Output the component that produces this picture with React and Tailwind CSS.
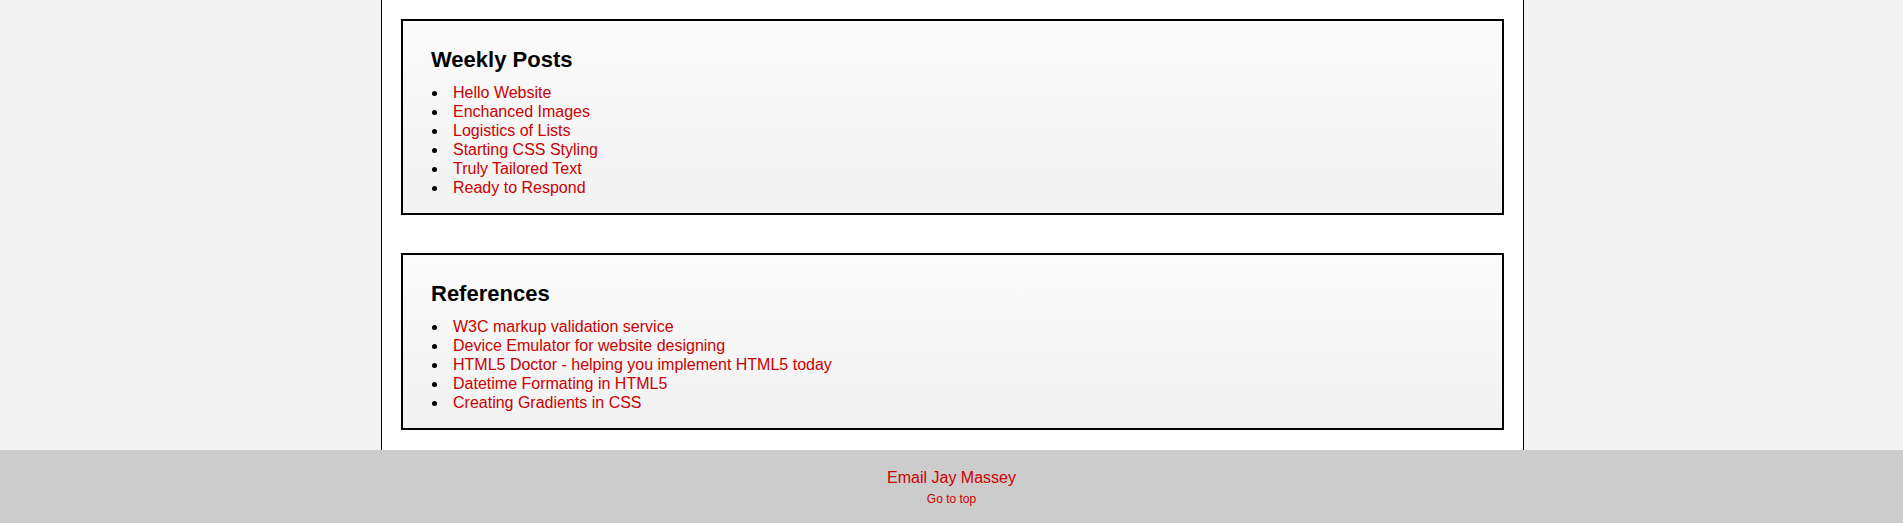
export default function App() {
  const weekly = [
    "Hello Website",
    "Enchanced Images",
    "Logistics of Lists",
    "Starting CSS Styling",
    "Truly Tailored Text",
    "Ready to Respond",
  ];
  const refs = [
    "W3C markup validation service",
    "Device Emulator for website designing",
    "HTML5 Doctor - helping you implement HTML5 today",
    "Datetime Formating in HTML5",
    "Creating Gradients in CSS",
  ];
  const Box = ({ title, items }) => (
    <section className="border-2 border-black bg-gradient-to-b from-[#fbfbfb] to-[#f2f2f2] pl-[28px] pr-[26px] pt-[26px] pb-[16px]">
      <h2 className="text-[22px] leading-[25px] font-bold text-black mb-[11px]">{title}</h2>
      <ul className="list-disc pl-[17px] text-[16px] leading-[19px]">
        {items.map((t) => (
          <li key={t} className="pl-[5px] text-black">
            <a href="#" className="text-[#cc0000]">{t}</a>
          </li>
        ))}
      </ul>
    </section>
  );
  return (
    <div className="min-h-[523px] bg-[#f4f4f4] flex flex-col font-['Liberation_Sans',Arial,sans-serif]">
      <main className="ml-[381px] w-[1143px] border-x border-black bg-white px-[19px] pt-[19px] pb-[20px] flex flex-col gap-[38px]">
        <Box title="Weekly Posts" items={weekly} />
        <Box title="References" items={refs} />
      </main>
      <footer className="bg-[#cccccc] flex flex-col items-center pt-[18px] pb-[17px]">
        <a href="#" className="text-[16px] leading-[19px] text-[#cc0000]">Email Jay Massey</a>
        <a href="#" className="mt-[5px] text-[12px] leading-[14px] text-[#cc0000]">Go to top</a>
      </footer>
    </div>
  );
}
